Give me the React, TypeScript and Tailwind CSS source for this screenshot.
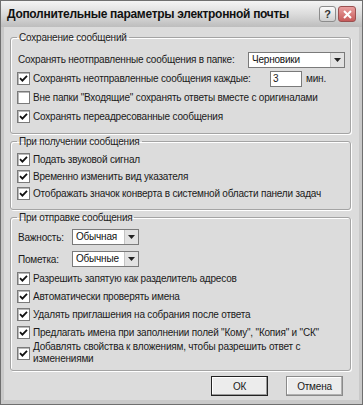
import React from 'react';

const font = { fontFamily: '"Liberation Sans", Arial, sans-serif' };

function Check({ checked }: { checked: boolean }) {
  return (
    <span className="w-[13px] h-[13px] shrink-0 bg-white border border-[#7a7a7a] shadow-[inset_1px_1px_0_#b8b8b8] flex items-center justify-center">
      {checked && (
        <svg width="9" height="9" viewBox="0 0 9 9">
          <path d="M1 4.2 L3.4 6.6 L8 1.8" fill="none" stroke="#111" strokeWidth="1.8" />
        </svg>
      )}
    </span>
  );
}

function CheckRow({ checked, children, h = 'h-[18px]' }: { checked: boolean; children: React.ReactNode; h?: string }) {
  return (
    <div className={`flex items-center gap-[3px] pl-[6px] ${h}`}>
      <Check checked={checked} />
      <span className="whitespace-nowrap">{children}</span>
    </div>
  );
}

function Select({ value, w }: { value: string; w: string }) {
  return (
    <div className={`${w} h-[16px] bg-white border border-[#7a7a7a] flex items-center`}>
      <span className="flex-1 pl-[3px] leading-[14px] text-[#111]">{value}</span>
      <span className="w-[14px] h-[14px] bg-[#e2e2e2] border-l border-[#c4c4c4] flex items-center justify-center">
        <svg width="7" height="4" viewBox="0 0 7 4">
          <path d="M0 0 H7 L3.5 4 Z" fill="#222" />
        </svg>
      </span>
    </div>
  );
}

function Group({ title, children, className = '' }: { title: string; children: React.ReactNode; className?: string }) {
  return (
    <fieldset className={`border border-[#a4a4a4] rounded-[3px] shadow-[inset_1px_1px_0_#fff,1px_1px_0_#fff] ${className}`}>
      <legend className="ml-[6px] px-[2px] leading-[13px] text-[#222]">{title}</legend>
      {children}
    </fieldset>
  );
}

export default function App() {
  return (
    <div className="w-[363px] h-[405px] bg-[#6f6f6f] p-[1px] text-[10px] tracking-[-0.2px] text-[#1a1a1a]" style={font}>
      <div className="h-full flex flex-col bg-[#c9c9c9] px-[3px] pb-[4px]">
        {/* title bar */}
        <div className="h-[26px] shrink-0 flex items-center bg-gradient-to-b from-[#f4f4f4] via-[#dcdcdc] to-[#bdbdbd] -mx-[3px] px-[6px]">
          <span className="flex-1 font-bold text-[12px] text-[#111] tracking-[-0.3px]">
            Дополнительные параметры электронной почты
          </span>
          <span className="w-[17px] h-[16px] rounded-[3px] border border-[#8c8c8c] bg-gradient-to-b from-[#fafafa] to-[#cfcfcf] flex items-center justify-center text-[11px] font-bold text-[#333]">
            ?
          </span>
          <span className="ml-[2px] w-[18px] h-[16px] rounded-[3px] border border-[#9a5050] bg-gradient-to-b from-[#e9a0a0] to-[#c65a5a] flex items-center justify-center">
            <svg width="9" height="9" viewBox="0 0 9 9">
              <path d="M1 1 L8 8 M8 1 L1 8" stroke="#fff" strokeWidth="2" />
            </svg>
          </span>
        </div>

        {/* content */}
        <div className="flex-1 bg-[#dcdcdc] pl-[6px] pr-[8px] pt-[4px] flex flex-col">
          <Group title="Сохранение сообщений" className="pb-[7px]">
            <div className="mt-[6px] h-[19px] flex items-center pl-[7px]">
              <span className="w-[230px] whitespace-nowrap">Сохранять неотправленные сообщения в папке:</span>
              <Select value="Черновики" w="w-[97px]" />
            </div>
            <div className="h-[19px] flex items-center gap-[3px] pl-[6px]">
              <Check checked />
              <span className="w-[234px] whitespace-nowrap">Сохранять неотправленные сообщения каждые:</span>
              <span className="w-[32px] h-[16px] bg-white border border-[#7a7a7a] pl-[2px] leading-[14px]">3</span>
              <span className="ml-[1px]">мин.</span>
            </div>
            <CheckRow checked={false} h="h-[19px]">
              Вне папки "Входящие" сохранять ответы вместе с оригиналами
            </CheckRow>
            <CheckRow checked h="h-[19px]">
              Сохранять переадресованные сообщения
            </CheckRow>
          </Group>

          <Group title="При получении сообщения" className="mt-[1px] pb-[7px]">
            <div className="mt-[3px]" />
            <CheckRow checked h="h-[17px]">Подать звуковой сигнал</CheckRow>
            <CheckRow checked h="h-[17px]">Временно изменить вид указателя</CheckRow>
            <CheckRow checked h="h-[17px]">Отображать значок конверта в системной области панели задач</CheckRow>
          </Group>

          <Group title="При отправке сообщения" className="mt-[1px] pb-[5px]">
            <div className="mt-[3px] h-[20px] flex items-center pl-[7px]">
              <span className="w-[54px]">Важность:</span>
              <Select value="Обычная" w="w-[67px]" />
            </div>
            <div className="mt-[2px] h-[20px] flex items-center pl-[7px]">
              <span className="w-[54px]">Пометка:</span>
              <Select value="Обычные" w="w-[67px]" />
            </div>
            <CheckRow checked>Разрешить запятую как разделитель адресов</CheckRow>
            <CheckRow checked>Автоматически проверять имена</CheckRow>
            <CheckRow checked>Удалять приглашения на собрания после ответа</CheckRow>
            <CheckRow checked>Предлагать имена при заполнении полей "Кому", "Копия" и "СК"</CheckRow>
            <div className="h-[24px] flex items-center gap-[3px] pl-[6px]">
              <Check checked />
              <span className="leading-[12px] whitespace-nowrap">
                Добавлять свойства к вложениям, чтобы разрешить ответ с
                <br />
                изменениями
              </span>
            </div>
          </Group>

          <div className="mt-[5px] flex justify-end gap-[18px] pr-[8px]">
            <button className="w-[57px] h-[20px] border border-[#222] bg-[#ececec] shadow-[inset_-1px_-1px_0_#9a9a9a,inset_1px_1px_0_#fff] text-[10px]">
              ОК
            </button>
            <button className="w-[57px] h-[20px] border border-[#8a8a8a] bg-[#ececec] shadow-[inset_-1px_-1px_0_#b0b0b0,inset_1px_1px_0_#fff] text-[10px]">
              Отмена
            </button>
          </div>
        </div>
      </div>
    </div>
  );
}
